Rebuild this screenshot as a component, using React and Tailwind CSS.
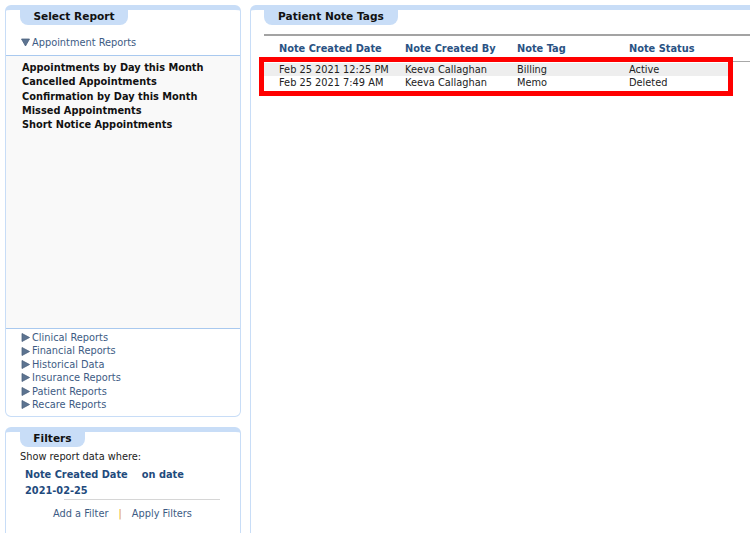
import React from "react";

function Tri({ down }) {
  return (
    <svg width="9" height="9" viewBox="0 0 9 9" className="shrink-0">
      {down ? (
        <path d="M0.5 1 L8.5 1 L4.5 8 Z" fill="#5d7491" stroke="#4b627f" strokeWidth="0.8" />
      ) : (
        <path d="M1 0.5 L8.5 4.5 L1 8.5 Z" fill="#5d7491" stroke="#4b627f" strokeWidth="0.8" />
      )}
    </svg>
  );
}

const reports = [
  "Appointments by Day this Month",
  "Cancelled Appointments",
  "Confirmation by Day this Month",
  "Missed Appointments",
  "Short Notice Appointments",
];

const groups = [
  "Clinical Reports",
  "Financial Reports",
  "Historical Data",
  "Insurance Reports",
  "Patient Reports",
  "Recare Reports",
];

const rows = [
  ["Feb 25 2021 12:25 PM", "Keeva Callaghan", "Billing", "Active"],
  ["Feb 25 2021 7:49 AM", "Keeva Callaghan", "Memo", "Deleted"],
];

export default function App() {
  return (
    <div className="flex gap-[9px] p-[5px] pb-0 h-[533px] w-[750px] overflow-hidden bg-white font-['DejaVu_Sans','Verdana',sans-serif] text-[9.8px] text-[#222] whitespace-nowrap">
      <div className="w-[236px] shrink-0 flex flex-col gap-[10px]">
        {/* Select Report panel */}
        <div className="h-[412px] border border-[#c8ddf7] border-t-[5px] rounded-[6px] flex flex-col">
          <div className="ml-[14px] w-[108px] h-[15px] bg-[#c8ddf7] rounded-b-[8px] text-[10.6px] font-bold text-[#111] text-center leading-[12px]">
            Select Report
          </div>
          <div className="h-[30px] flex flex-col justify-end pb-[6px] pl-[15px]">
            <div className="flex items-center gap-[2px] text-[#3d5b84] leading-[13px]">
              <Tri down />
              <span>Appointment Reports</span>
            </div>
          </div>
          <div className="h-[274px] border-y border-[#a9c9ef] bg-[#f9f9f9] pt-[5px] pl-[16px] font-bold text-[#111] leading-[14.3px]">
            {reports.map((r) => (
              <div key={r}>{r}</div>
            ))}
          </div>
          <div className="pt-[2px] pl-[15px] text-[#3d5b84] leading-[13.4px]">
            {groups.map((g) => (
              <div key={g} className="flex items-center gap-[2px]">
                <Tri />
                <span>{g}</span>
              </div>
            ))}
          </div>
        </div>
        {/* Filters panel */}
        <div className="flex-1 border border-[#c8ddf7] border-t-[5px] border-b-0 rounded-t-[6px] flex flex-col">
          <div className="ml-[14px] w-[65px] h-[15px] bg-[#c8ddf7] rounded-b-[8px] text-[10.6px] font-bold text-[#111] text-center leading-[12px]">
            Filters
          </div>
          <div className="pl-[14px] pt-[3px] leading-[14px]">Show report data where:</div>
          <div className="pl-[19px] pt-[3px] font-bold text-[#1f4b7d] leading-[16px]">
            <div>
              Note Created Date<span className="ml-[14px]">on date</span>
            </div>
            <div>2021-02-25</div>
          </div>
          <div className="ml-[58px] w-[156px] h-[1px] bg-[#d6d6d6]" />
          <div className="pt-[7px] pl-[47px] text-[#3d5b84] leading-[14px]">
            Add a Filter<span className="mx-[10px] text-[#e0a030]">|</span>Apply Filters
          </div>
        </div>
      </div>

      {/* Right panel */}
      <div className="relative flex-1 -mr-[20px] border border-[#c8ddf7] border-t-[5px] border-b-0 rounded-t-[6px]">
        <div className="ml-[13px] w-[134px] h-[15px] bg-[#c8ddf7] rounded-b-[8px] text-[10.6px] font-bold text-[#111] text-center leading-[12px]">
          Patient Note Tags
        </div>
        <div className="ml-[13px] mt-[9px] h-[2px] bg-[#a3a3a3]" />
        <div className="ml-[13px] mt-[2px]">
          <div className="flex h-[24px] pt-[5px] leading-[12px] font-bold text-[#2a5283] border-b border-[#a8a8a8] pl-[15px]">
            <div className="w-[126px]">Note Created Date</div>
            <div className="w-[112px]">Note Created By</div>
            <div className="w-[112px]">Note Tag</div>
            <div>Note Status</div>
          </div>
          <div className="w-[466px] pt-[1px]">
            {rows.map((r, i) => (
              <div
                key={i}
                className={`flex h-[13px] items-center leading-[13px] pl-[15px] ${i === 0 ? "bg-[#eeeeee]" : ""}`}
              >
                <div className="w-[126px]">{r[0]}</div>
                <div className="w-[112px]">{r[1]}</div>
                <div className="w-[112px]">{r[2]}</div>
                <div>{r[3]}</div>
              </div>
            ))}
          </div>
        </div>
        <div className="absolute left-[8px] top-[47px] w-[474px] h-[39px] border-[5px] border-[#ff0000]" />
      </div>
    </div>
  );
}
